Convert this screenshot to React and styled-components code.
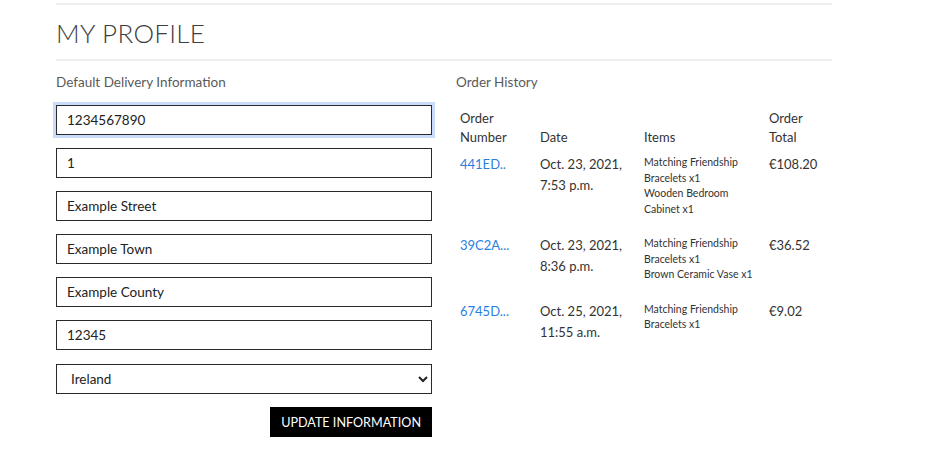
import React from 'react';
import styled, { createGlobalStyle } from 'styled-components';

const GlobalStyle = createGlobalStyle`
  body {
    margin: 0;
    background: #fff;
    font-family: "Lato", "Open Sans", sans-serif;
    color: #333;
  }
`;

const Page = styled.div`
  width: 776px;
  margin-left: 56px;
`;

const Rule = styled.hr`
  border: none;
  border-top: 2px solid #efefef;
  margin: ${props => props.$m || '0'};
`;

const Title = styled.h1`
  font-size: 26px;
  font-weight: 300;
  color: #3e3e3e;
  margin: 0;
  padding: 13px 0 11px;
  letter-spacing: 0.3px;
  line-height: 30px;
`;

const Columns = styled.div`
  display: grid;
  grid-template-columns: 376px 376px;
  column-gap: 24px;
  margin-top: 12px;
`;

const Label = styled.p`
  font-size: 13.5px;
  color: #5a5a5a;
  margin: 0 0 14px;
  line-height: 18px;
`;

const Form = styled.form`
  display: flex;
  flex-direction: column;
  gap: 13px;
`;

const Field = styled.input`
  box-sizing: border-box;
  width: 100%;
  height: 30px;
  border: 1px solid #2a2a2a;
  padding: 0 10px;
  font-family: inherit;
  font-size: 13.5px;
  color: #222;
  background: #fff;
  outline: none;
  box-shadow: ${props => (props.$focused ? '0 0 0 3px #c9ddf9' : 'none')};
  border-radius: 0;
`;

const Select = styled.select`
  box-sizing: border-box;
  width: 100%;
  height: 30px;
  margin-top: 1px;
  border: 1px solid #2a2a2a;
  padding: 0 10px;
  font-family: inherit;
  font-size: 13.5px;
  color: #222;
  background: #fff;
  border-radius: 0;
`;

const Actions = styled.div`
  display: flex;
  justify-content: flex-end;
`;

const Submit = styled.button`
  height: 30px;
  padding: 0 11px;
  border: none;
  border-radius: 0;
  background: #000;
  color: #fff;
  font-family: inherit;
  font-size: 12.6px;
  text-transform: uppercase;
`;

const Table = styled.table`
  width: 376px;
  border-collapse: collapse;
  table-layout: fixed;
  margin-top: 18px;
  th, td {
    text-align: left;
    vertical-align: top;
    padding: 7px 4px 11px;
  }
  th {
    font-weight: 400;
    font-size: 13px;
    line-height: 19px;
    color: #333;
    vertical-align: bottom;
    padding: 0 4px;
  }
  td {
    font-size: 13px;
    line-height: 21px;
    color: #333;
  }
`;

const OrderLink = styled.a`
  color: #2a7fe3;
  text-decoration: none;
`;

const Items = styled.td`
  && {
    font-size: 10.5px;
    line-height: 15.5px;
    padding-top: 8px;
  }
`;

const orders = [
  {
    num: '441ED..',
    date: ['Oct. 23, 2021,', '7:53 p.m.'],
    items: ['Matching Friendship Bracelets x1', 'Wooden Bedroom Cabinet x1'],
    total: '€108.20',
  },
  {
    num: '39C2A...',
    date: ['Oct. 23, 2021,', '8:36 p.m.'],
    items: ['Matching Friendship Bracelets x1', 'Brown Ceramic Vase x1'],
    total: '€36.52',
  },
  {
    num: '6745D...',
    date: ['Oct. 25, 2021,', '11:55 a.m.'],
    items: ['Matching Friendship Bracelets x1'],
    total: '€9.02',
  },
];

export default function App() {
  return (
    <>
      <GlobalStyle />
      <Page>
        <Rule $m="3px 0 0" />
        <Title>MY PROFILE</Title>
        <Rule />
        <Columns>
          <div>
            <Label>Default Delivery Information</Label>
            <Form onSubmit={e => e.preventDefault()}>
              <Field $focused defaultValue="1234567890" />
              <Field defaultValue="1" />
              <Field defaultValue="Example Street" />
              <Field defaultValue="Example Town" />
              <Field defaultValue="Example County" />
              <Field defaultValue="12345" />
              <Select defaultValue="IE">
                <option value="IE">Ireland</option>
              </Select>
              <Actions>
                <Submit type="submit">Update Information</Submit>
              </Actions>
            </Form>
          </div>
          <div>
            <Label>Order History</Label>
            <Table>
              <colgroup>
                <col style={{ width: 80 }} />
                <col style={{ width: 104 }} />
                <col style={{ width: 125 }} />
                <col style={{ width: 67 }} />
              </colgroup>
              <thead>
                <tr>
                  <th>Order Number</th>
                  <th>Date</th>
                  <th>Items</th>
                  <th>Order Total</th>
                </tr>
              </thead>
              <tbody>
                {orders.map(o => (
                  <tr key={o.num}>
                    <td><OrderLink href="#">{o.num}</OrderLink></td>
                    <td>{o.date[0]}<br />{o.date[1]}</td>
                    <Items>
                      {o.items.map(i => <div key={i}>{i}</div>)}
                    </Items>
                    <td>{o.total}</td>
                  </tr>
                ))}
              </tbody>
            </Table>
          </div>
        </Columns>
      </Page>
    </>
  );
}
